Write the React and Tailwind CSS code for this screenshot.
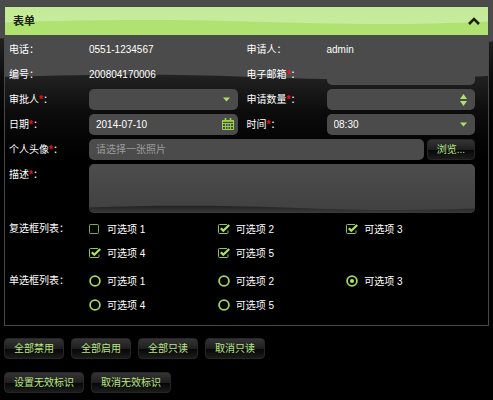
import React, { useState } from 'react';

const OPTIONS = [1, 2, 3, 4, 5];

const fieldClass =
  'block h-[21px] w-full min-w-0 appearance-none rounded-[5px] bg-[#4b4b4b] px-[7px] text-[10px] text-white outline-none placeholder:text-[#9c9c9c]';

// Glossy backdrop: grey at the top, then a wave fading into black
const Backdrop = ({ id, wave, className }) => (
  <svg
    className={`pointer-events-none absolute inset-x-0 top-0 w-full ${className}`}
    viewBox="0 0 480 100"
    preserveAspectRatio="none"
    aria-hidden="true"
  >
    <defs>
      <linearGradient id={id} x1="0" y1="0" x2="0" y2="1">
        <stop offset="0" stopColor="#222222" />
        <stop offset="0.45" stopColor="#0c0c0c" />
        <stop offset="1" stopColor="#000000" />
      </linearGradient>
    </defs>
    <rect width="480" height="100" fill="#4b4b4b" />
    <path d={wave} fill={`url(#${id})`} />
  </svg>
);

const Label = ({ children, required, htmlFor }) => {
  const Tag = htmlFor ? 'label' : 'span';
  return (
    <Tag htmlFor={htmlFor} className="h-[21px] leading-[21px] whitespace-nowrap">
      {children}
      {required && <span className="font-bold text-[#e8101c]">*</span>}：
    </Tag>
  );
};

const Field = ({ label, htmlFor, required, children }) => (
  <div className="grid grid-cols-[80px_1fr]">
    <Label htmlFor={htmlFor} required={required}>{label}</Label>
    <div className="relative min-w-0 leading-[21px]">{children}</div>
  </div>
);

const Button = ({ onClick, children }) => (
  <button
    type="button"
    onClick={onClick}
    className="h-[21px] rounded-[4px] border border-[#262626] bg-[linear-gradient(#343434_0%,#1f1f1f_50%,#060606_52%,#1c1c1c_100%)] px-[9px] text-[10px] leading-none whitespace-nowrap text-[#b9e583]"
  >
    {children}
  </button>
);

const CaretDown = () => (
  <svg className="pointer-events-none absolute top-2 right-2 h-[5px] w-[7px]" viewBox="0 0 7 5" fill="#b0e06c">
    <path d="M0 0.5H7L3.5 4.5Z" />
  </svg>
);

const CalendarIcon = () => (
  <svg className="size-3" viewBox="0 0 12 12" fill="none" stroke="#9bd648">
    <path d="M0.5 2.5H11.5V11.5H0.5Z" />
    <path d="M0.5 3H11.5" strokeWidth="1.6" />
    <path d="M0.5 5.5H11.5M0.5 8.5H11.5M3.5 5V11.5M6 5V11.5M8.5 5V11.5" strokeWidth="0.9" />
    <path d="M3.5 0V3M8.5 0V3" strokeWidth="1.6" />
  </svg>
);

const CheckOption = ({ n, checked, onChange }) => (
  <label className="flex h-6 items-center gap-1.5 whitespace-nowrap">
    <span className="relative size-3">
      <input
        type="checkbox"
        name="checks"
        value={n}
        checked={checked}
        onChange={onChange}
        className="absolute inset-0 size-3 appearance-none"
      />
      <svg className="pointer-events-none absolute inset-0 size-3" viewBox="0 0 12 12" fill="none" stroke="#92c651">
        {checked ? (
          <>
            <path d="M9 1.5H1.5Q0.5 1.5 0.5 2.5V9.5Q0.5 10.5 1.5 10.5H9Q10 10.5 10 9.5V7.5" />
            <path d="M2.8 5.2L5.3 7.7L11.2 2" stroke="#b0e95f" strokeWidth="2.2" />
          </>
        ) : (
          <rect x="0.5" y="1.5" width="9" height="9" rx="0.8" stroke="#7fae45" />
        )}
      </svg>
    </span>
    可选项 {n}
  </label>
);

const RadioOption = ({ n, checked, onChange }) => (
  <label className="flex h-6 items-center gap-1.5 whitespace-nowrap">
    <span className="relative size-3">
      <input
        type="radio"
        name="radios"
        value={n}
        checked={checked}
        onChange={onChange}
        className="absolute inset-0 size-3 appearance-none"
      />
      <svg className="pointer-events-none absolute inset-0 size-3" viewBox="0 0 12 12" fill="none">
        <circle cx="6" cy="6" r="4.9" stroke="#a3d65c" strokeWidth="1.8" />
        {checked && <circle cx="6" cy="6" r="2" fill="#b0e95f" />}
      </svg>
    </span>
    可选项 {n}
  </label>
);

const App = () => {
  const [open, setOpen] = useState(true);
  const [disabled, setDisabled] = useState(false);
  const [readOnly, setReadOnly] = useState(false);
  const [invalid, setInvalid] = useState(false);
  const [checks, setChecks] = useState([2, 3, 4, 5]);
  const [radio, setRadio] = useState(3);
  const [formData, setFormData] = useState({
    approver: '',
    email: '',
    amount: '',
    date: '2014-07-10',
    time: '08:30',
    photo: '',
    description: ''
  });

  const handleChange = (e) => {
    const { name, value } = e.target;
    setFormData(prev => ({ ...prev, [name]: value }));
  };

  const stepAmount = (step) => {
    setFormData(prev => ({ ...prev, amount: String(Number(prev.amount) + step) }));
  };

  const toggleCheck = (n) => {
    setChecks(prev => (prev.includes(n) ? prev.filter(i => i !== n) : [...prev, n]));
  };

  const bind = (name) => ({
    id: name,
    name,
    value: formData[name],
    onChange: handleChange,
    'aria-invalid': invalid
  });

  return (
    <div className="relative min-h-screen bg-black px-1 pt-1.5 pb-1.5 font-['Liberation_Sans','Noto_Sans_CJK_SC',sans-serif] text-[10px] text-white">
      <Backdrop id="page-fade" className="h-[130px]" wave="M0 29.6C90 27 150 27 240 30S400 35 480 32V100H0Z" />

      <form className="relative" onSubmit={(e) => e.preventDefault()}>
        <section className="relative border border-[#484848] bg-black">
          <Backdrop id="panel-fade" className="h-[150px]" wave="M0 46.5C90 45 160 44.5 240 46.5S390 49.5 480 46V100H0Z" />

          {/* Header */}
          <div className="relative flex h-7 items-center justify-between bg-linear-to-b from-[#c3ea96] to-[#cbeca3] px-2">
            <svg
              className="absolute inset-0 size-full"
              viewBox="0 0 480 28"
              preserveAspectRatio="none"
              aria-hidden="true"
            >
              <path d="M0 15.5C90 12.5 160 12.5 240 14.5S390 19 480 14.5V28H0Z" fill="#b0e272" />
            </svg>
            <h2 className="relative text-[11px] font-bold text-[#182008]">表单</h2>
            <button
              type="button"
              aria-label="折叠"
              aria-expanded={open}
              onClick={() => setOpen(!open)}
              className="relative"
            >
              <svg className="h-2 w-3" viewBox="0 0 12 8" fill="none" stroke="#182008" strokeWidth="2.6">
                <path d="M1 7L6 2L11 7" />
              </svg>
            </button>
          </div>

          {open && (
            <fieldset disabled={disabled} className="relative flex flex-col gap-1 pt-1 pr-[13px] pb-2 pl-1">
              <div className="grid grid-cols-2 gap-x-[9px] gap-y-1">
                <Field label="电话">0551-1234567</Field>
                <Field label="申请人">admin</Field>
                <Field label="编号">200804170006</Field>
                <Field label="电子邮箱" htmlFor="email" required>
                  <input type="email" readOnly={readOnly} className={fieldClass} {...bind('email')} />
                </Field>
                <Field label="审批人" htmlFor="approver" required>
                  <select className={fieldClass} {...bind('approver')}>
                    <option value=""></option>
                    <option value="admin">admin</option>
                  </select>
                  <CaretDown />
                </Field>
                <Field label="申请数量" htmlFor="amount" required>
                  <input type="text" inputMode="numeric" readOnly={readOnly} className={fieldClass} {...bind('amount')} />
                  <div className="absolute inset-y-0 right-2 flex flex-col justify-center gap-0.5">
                    <button type="button" aria-label="+" onClick={() => stepAmount(1)}>
                      <svg className="block h-[5px] w-[7px]" viewBox="0 0 7 5" fill="#b0e06c">
                        <path d="M0 5H7L3.5 0Z" />
                      </svg>
                    </button>
                    <button type="button" aria-label="-" onClick={() => stepAmount(-1)}>
                      <svg className="block h-[5px] w-[7px]" viewBox="0 0 7 5" fill="#b0e06c">
                        <path d="M0 0H7L3.5 5Z" />
                      </svg>
                    </button>
                  </div>
                </Field>
                <Field label="日期" htmlFor="date" required>
                  <input type="text" readOnly={readOnly} className={fieldClass} {...bind('date')} />
                  <button type="button" aria-label="日期" className="absolute top-1 right-1">
                    <CalendarIcon />
                  </button>
                </Field>
                <Field label="时间" htmlFor="time" required>
                  <select className={fieldClass} {...bind('time')}>
                    <option>08:00</option>
                    <option>08:30</option>
                    <option>09:00</option>
                  </select>
                  <CaretDown />
                </Field>
              </div>

              <Field label="个人头像" htmlFor="photo" required>
                <div className="flex gap-[3px]">
                  <input
                    type="text"
                    placeholder="请选择一张照片"
                    readOnly={readOnly}
                    className={fieldClass}
                    {...bind('photo')}
                  />
                  <Button>浏览...</Button>
                </div>
              </Field>

              <Field label="描述" htmlFor="description" required>
                <div className="relative overflow-hidden rounded-[5px] bg-linear-to-b from-[#4d4d4d] to-[#404040]">
                  <svg
                    className="absolute inset-x-0 bottom-0 h-2 w-full"
                    viewBox="0 0 386 8"
                    preserveAspectRatio="none"
                    aria-hidden="true"
                  >
                    <defs>
                      <linearGradient id="area-fade" x1="0" y1="0" x2="0" y2="1">
                        <stop offset="0" stopColor="#222222" />
                        <stop offset="1" stopColor="#3a3a3a" />
                      </linearGradient>
                    </defs>
                    <path d="M0 2.5C60 0 130 0 195 2.5S310 6 386 3.5V8H0Z" fill="url(#area-fade)" />
                  </svg>
                  <textarea
                    readOnly={readOnly}
                    className="relative block h-[49px] w-full resize-none bg-transparent px-[7px] py-1 text-[10px] outline-none"
                    {...bind('description')}
                  />
                </div>
              </Field>

              <div className="grid grid-cols-[80px_1fr]" role="group" aria-label="复选框列表">
                <div className="leading-6">复选框列表：</div>
                <div className="grid grid-cols-3">
                  {OPTIONS.map(n => (
                    <CheckOption key={n} n={n} checked={checks.includes(n)} onChange={() => toggleCheck(n)} />
                  ))}
                </div>
              </div>

              <div className="grid grid-cols-[80px_1fr]" role="radiogroup" aria-label="单选框列表">
                <div className="leading-6">单选框列表：</div>
                <div className="grid grid-cols-3">
                  {OPTIONS.map(n => (
                    <RadioOption key={n} n={n} checked={radio === n} onChange={() => setRadio(n)} />
                  ))}
                </div>
              </div>
            </fieldset>
          )}
        </section>

        {/* Actions */}
        <div className="mt-3 flex flex-col gap-[13px]">
          <div className="flex flex-wrap gap-[7px]">
            <Button onClick={() => setDisabled(true)}>全部禁用</Button>
            <Button onClick={() => setDisabled(false)}>全部启用</Button>
            <Button onClick={() => setReadOnly(true)}>全部只读</Button>
            <Button onClick={() => setReadOnly(false)}>取消只读</Button>
          </div>
          <div className="flex flex-wrap gap-[7px]">
            <Button onClick={() => setInvalid(true)}>设置无效标识</Button>
            <Button onClick={() => setInvalid(false)}>取消无效标识</Button>
          </div>
        </div>
      </form>
    </div>
  );
};

export default App;
